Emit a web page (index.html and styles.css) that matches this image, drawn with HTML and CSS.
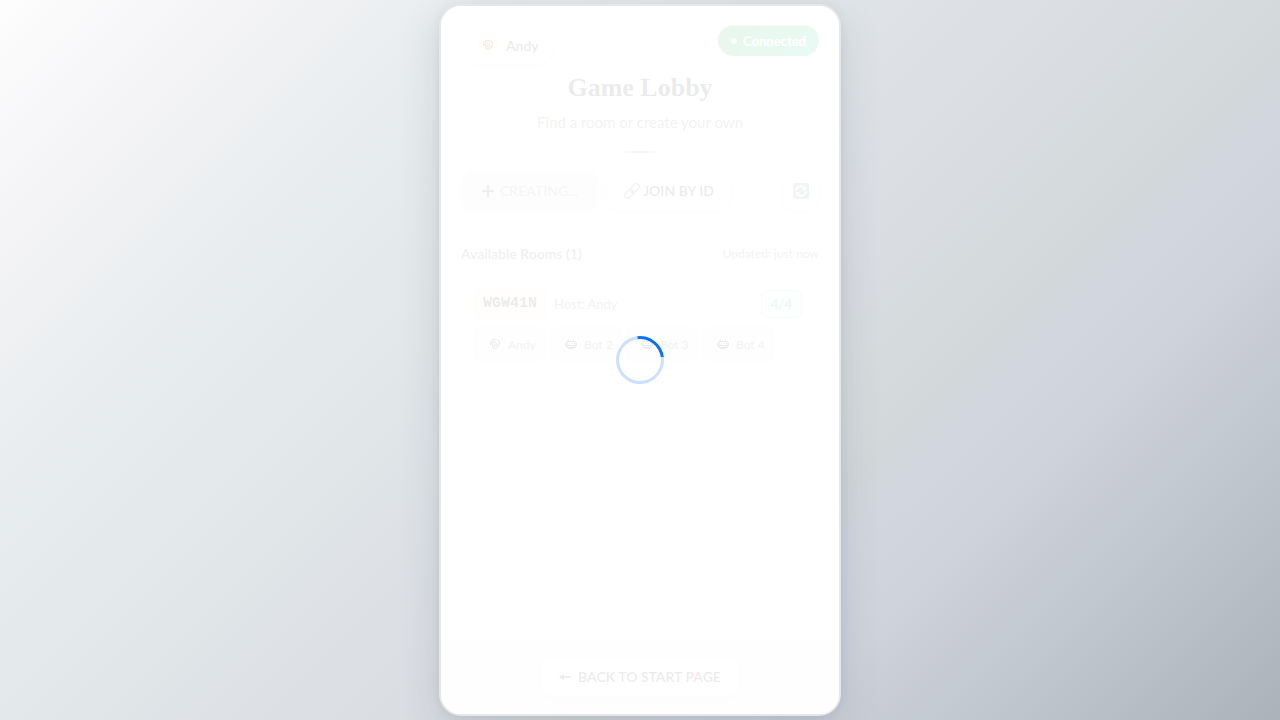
FILE: index.html
```html
<!DOCTYPE html>
<html lang="en">
<head>
<meta charset="utf-8">
<meta name="viewport" content="width=device-width, initial-scale=1">
<title>Game Lobby</title>
<link rel="stylesheet" href="styles.css">
</head>
<body>
<svg class="defs" aria-hidden="true">
  <symbol id="person" viewBox="0 0 24 24"><g fill="none" stroke="currentColor" stroke-width="2.2" stroke-linecap="round" stroke-linejoin="round"><path d="M3 12C2 6 7 3 12 3c6 0 10 4 9 10l-2 3"/><path d="M7 12c0-4 2-5 5-4s5 4 3 7"/><path d="M3 12l4 1v4l4 4 5-1 3-4"/><path d="M11 12v3l3 1"/></g></symbol>
  <symbol id="robot" viewBox="0 0 24 24"><g fill="none" stroke="currentColor" stroke-width="2.2" stroke-linejoin="round"><path d="M4 7h16v12H4zM1 10v6M23 10v6M7 3v4M17 3v4M4 15h16"/><path d="M9 10v2M15 10v2M8 19v2h8v-2"/></g></symbol>
</svg>
<main class="phone">
  <header class="header">
    <div class="topbar">
      <div class="user"><span class="avatar gold"><svg><use href="#person"/></svg></span>Andy</div>
      <div class="status"><span class="dot"></span>Connected</div>
    </div>
    <h1 class="title">Game Lobby</h1>
    <p class="subtitle">Find a room or create your own</p>
    <div class="rule"></div>
  </header>
  <section class="actions">
    <button class="btn creating" disabled><svg viewBox="0 0 12 12"><path d="M6 0v12M0 6h12" stroke="currentColor" stroke-width="2"/></svg>CREATING...</button>
    <button class="btn join"><svg class="chain" viewBox="0 0 16 16"><g fill="none" stroke="#829099" stroke-width="1.5" transform="rotate(-45 8 8)"><rect x="-1" y="5" width="10" height="6" rx="3"/><rect x="7" y="5" width="10" height="6" rx="3"/></g></svg>JOIN BY ID</button>
    <button class="btn refresh" aria-label="Refresh"><svg viewBox="0 0 16 16"><rect width="16" height="16" rx="2" fill="#85939e"/><path d="M3 8c0-5 6-6 9-3M13 8c0 5-6 6-9 3" fill="none" stroke="#fff" stroke-width="1.5"/><path d="M13 3v4H9zM3 13V9h4z" fill="#fff"/></svg></button>
  </section>
  <section class="rooms">
    <div class="rooms-head"><h2>Available Rooms (1)</h2><span>Updated: just now</span></div>
    <article class="room">
      <div class="room-head"><strong class="code">WGW41N</strong><span class="host">Host: Andy</span><span class="count">4/4</span></div>
      <ul class="players">
        <li><span class="avatar"><svg><use href="#person"/></svg></span>Andy</li>
        <li><span class="avatar"><svg><use href="#robot"/></svg></span>Bot 2</li>
        <li><span class="avatar"><svg><use href="#robot"/></svg></span>Bot 3</li>
        <li><span class="avatar"><svg><use href="#robot"/></svg></span>Bot 4</li>
      </ul>
    </article>
  </section>
  <footer class="footer"><button class="btn back"><svg viewBox="0 0 12 12"><path d="M1 6h11" stroke="currentColor" stroke-width="1.5"/><path d="M0 6l5-3v6z" fill="currentColor"/></svg>BACK TO START PAGE</button></footer>
  <div class="overlay" role="status" aria-label="Loading"><span class="spinner"></span></div>
</main>
</body>
</html>
```
FILE: styles.css
```css
* { box-sizing: border-box; }
body {
  margin: 0;
  min-height: 100vh;
  padding: 4px 0;
  display: flex;
  justify-content: center;
  font-family: Lato, "Noto Sans", sans-serif;
  color: #333b3d;
  background: linear-gradient(135deg, #fdfdfe 0%, #f3f3f5 13%, #e9edef 23%, #e2e7e9 38%, #dee2e6 46%, #d9dce1 57%, #d6dbde 61%, #d2d7da 67%, #d2d6df 69%, #ced3dc 75%, #c8cbd4 80%, #c4cbd2 82%, #abb2b9 100%);
}
.defs { position: absolute; width: 0; height: 0; }
.phone {
  position: relative;
  width: 100%;
  max-width: 402px;
  display: flex;
  flex-direction: column;
  overflow: hidden;
  background: #fff;
  border: 2px solid #e5e8eb;
  border-radius: 22px;
  box-shadow: 0 12px 40px rgba(60, 75, 85, .16), 0 2px 8px rgba(60, 75, 85, .08);
}
.header { padding: 19px 20px 0; }
.topbar { display: flex; justify-content: space-between; align-items: flex-start; height: 38px; }
.user {
  display: flex;
  align-items: center;
  gap: 8px;
  height: 36px;
  margin-top: 2px;
  padding: 0 14px 0 17px;
  border-radius: 18px;
  font-size: 14px;
  font-weight: 600;
  box-shadow: 0 4px 16px rgba(0, 0, 0, .1);
}
.avatar {
  display: flex;
  align-items: center;
  justify-content: center;
  width: 20px;
  height: 20px;
  border-radius: 50%;
  background: #fff;
  border: 1px solid #d9d9d9;
}
.avatar svg { width: 12px; height: 12px; color: #333b3d; }
.gold { background: #fff4cc; border-color: #ffe099; }
.status {
  display: flex;
  align-items: center;
  gap: 6px;
  height: 31px;
  padding: 0 13px;
  border-radius: 16px;
  background: linear-gradient(135deg, #28a745, #20c997);
  box-shadow: inset 0 1px 0 #8cd9aa, 0 4px 12px rgba(40, 167, 69, .1);
  color: #fff;
  font-size: 13px;
  font-weight: 700;
}
.dot { width: 6px; height: 6px; border-radius: 50%; background: #d0f0de; }
.title {
  margin: 7px 0 0;
  font: 700 26px/36px "Liberation Serif", serif;
  text-align: center;
}
.subtitle { margin: 6px 0 0; font-size: 15px; line-height: 20px; text-align: center; color: #777; }
.rule { width: 40px; height: 2px; margin: 19px auto 0; background: linear-gradient(90deg, transparent, #888, transparent); }
.actions { display: flex; gap: 8px; padding: 18px 20px 15px; border-bottom: 1px solid #eaeded; }
.btn {
  display: flex;
  align-items: center;
  justify-content: center;
  gap: 6px;
  height: 40px;
  padding: 0 18px;
  border: 1px solid #f3f3f3;
  border-radius: 12px;
  background: #fff;
  color: inherit;
  font: 600 14px/20px Lato, "Noto Sans", sans-serif;
  box-shadow: 0 2px 8px rgba(0, 0, 0, .1);
}
.btn svg { width: 12px; height: 12px; }
.creating { padding: 0 20px; background: #e9e9e9; color: #999; }
.creating svg { color: #555; }
.join { gap: 3px; padding: 0 16px; }
.btn .chain { width: 16px; height: 16px; overflow: visible; }
.refresh { width: 36px; margin-left: auto; padding: 0; }
.refresh svg { width: 16px; height: 16px; }
.rooms { flex: 1; padding: 16px 20px; }
.rooms-head { display: flex; justify-content: space-between; align-items: center; height: 20px; color: #777; font-size: 12px; }
.rooms-head h2 { margin: 0; font-size: 14px; font-weight: 600; color: #666; }
.room { margin-top: 14px; padding: 11px 16px 22px 12px; border: 1px solid #f5f5f5; border-radius: 12px; }
.room-head { display: flex; align-items: center; gap: 8px; }
.code { padding: 0 8px; border: 1px solid #ffe9c0; border-radius: 4px; background: #fff6df; font: 700 15px/28px "Liberation Mono", monospace; }
.host { font-size: 13px; color: #777; }
.count { margin-left: auto; padding: 0 9px; border: 1px solid #a9dcb8; border-radius: 6px; background: #e9f7ee; color: #4fb269; font-size: 13px; font-weight: 700; line-height: 26px; }
.players { display: flex; gap: 4px; margin: 8px 0 0; padding: 0; list-style: none; }
.players li { display: flex; align-items: center; gap: 3px; width: 72px; height: 34px; padding-left: 10px; border: 1px solid #e8e8e8; border-radius: 6px; background: #eee; color: #777; font-size: 12px; }
.footer { display: flex; justify-content: center; padding: 17px 20px; border-top: 1px solid #ecefef; background: #f4f5f5; }
.back { gap: 7px; padding: 0 17px; }
.overlay { position: absolute; inset: 0; display: flex; align-items: center; justify-content: center; background: rgba(255, 255, 255, .9); }
.spinner { width: 48px; height: 48px; border: 3px solid #cce0fe; border-top-color: #0d70fb; border-radius: 50%; transform: rotate(38deg); }
```
